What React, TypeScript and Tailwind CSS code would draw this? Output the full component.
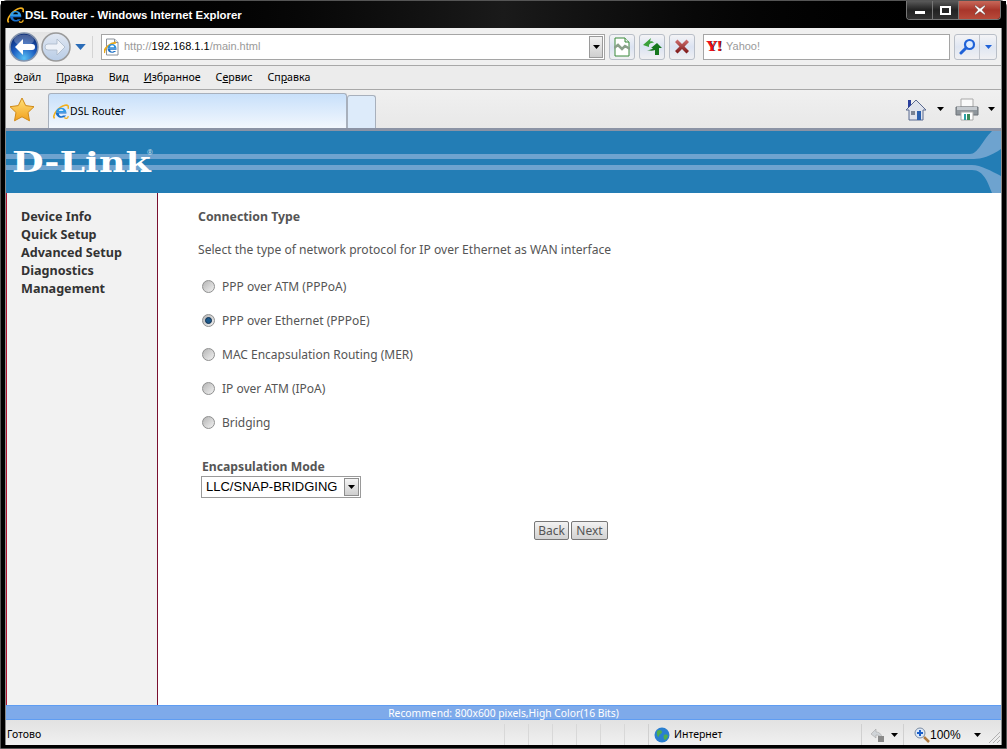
const ui = "font-['Noto_Sans',sans-serif]";

const IeLogo = ({ size = 16 }: { size?: number }) => (
  <svg width={size} height={size} viewBox="0 0 20 20" className="shrink-0">
    <path d="M2 18C-2 14 8 3 15 1.500c3.500-.6 5 1 3.800 4.500" fill="none" stroke="#f2b01e" strokeWidth="2" />
    <path d="M3.500 10.500a6.700 6.700 0 0 1 13.300 0H3.500zM7.200 8.600h5.900a3 3 0 0 0-5.900 0z" fill="#2f9be8" fillRule="evenodd" />
    <path d="M3.500 10.500c0 6.500 8.500 9 13 3.800h-4c-2 2-5 .8-5.300-2.300H16.800v-1.500z" fill="#1a6fca" />
    <path d="M14 17c2 1.500 5 1.500 5-2" fill="none" stroke="#f2b01e" strokeWidth="1.500" />
  </svg>
);

const PageIe = () => (
  <svg width="16" height="18" viewBox="0 0 16 18" className="shrink-0">
    <path d="M2.500 1h8l3.500 3.500V17h-11.500z" fill="#fff" stroke="#8a9098" />
    <path d="M10.500 1v3.500H14" fill="#dfe6ee" stroke="#8a9098" />
    <path d="M0.500 15C-1 11 6 5 12 4.500" fill="none" stroke="#e9a81c" strokeWidth="1.800" />
    <path d="M3.500 10.500a4.500 4.500 0 0 1 9 0h-9zM6 9.300h4.200a2.100 2.100 0 0 0-4.200 0z" fill="#2b8fdc" fillRule="evenodd" />
    <path d="M3.500 10.500c0 4.300 5.500 5.800 8.700 2.500H9.800c-1.300 1.300-3.400.5-3.700-1.300h6.400v-1.200z" fill="#1c6fc4" />
  </svg>
);

const NavCircle = ({ flip, dim }: { flip?: boolean; dim?: boolean }) => (
  <svg width="30" height="30" viewBox="0 0 30 30" className="shrink-0">
    <defs>
      <radialGradient id="navOn" cx="50%" cy="90%" r="80%">
        <stop offset="0%" stopColor="#58c0f4" />
        <stop offset="55%" stopColor="#1b5cc0" />
        <stop offset="100%" stopColor="#0b2c78" />
      </radialGradient>
      <linearGradient id="navOff" x1="0" y1="0" x2="0" y2="1">
        <stop offset="0%" stopColor="#e2e8f2" />
        <stop offset="100%" stopColor="#b8cce6" />
      </linearGradient>
    </defs>
    <circle cx="15" cy="15" r="14" fill={dim ? "url(#navOff)" : "url(#navOn)"} stroke={dim ? "#9a9a9a" : "#8494ac"} strokeWidth="1.500" />
    {!dim && <ellipse cx="15" cy="8" rx="10" ry="5.500" fill="#ffffff" opacity="0.25" />}
    <path
      d={flip ? "M16 7l8 8-8 8v-5H7a3 3 0 0 1 0-6h9z" : "M14 7l-8 8 8 8v-5h9a3 3 0 0 0 0-6h-9z"}
      fill={dim ? "#eef2f8" : "#fff"}
      stroke={dim ? "#a9b7c8" : "none"}
      strokeWidth="0.800"
    />
  </svg>
);

const Tri = ({ color = "#000", w = 7, h = 4 }: { color?: string; w?: number; h?: number }) => (
  <svg width={w} height={h} viewBox="0 0 7 4" className="shrink-0">
    <path d="M0 0h7L3.500 4z" fill={color} />
  </svg>
);

const ToolBtn = ({ children }: { children: React.ReactNode }) => (
  <div className="w-[26px] h-[26px] rounded-[3px] border border-[#b9bfc8] bg-gradient-to-b from-[#f4f4f6] via-[#dbe3f2] to-[#f0f0f2] flex items-center justify-center">
    {children}
  </div>
);

const Radio = ({ on }: { on?: boolean }) => (
  <span className="w-[13px] h-[13px] rounded-full border border-[#8e8f8f] bg-gradient-to-br from-[#b5b5b5] to-[#f2f2f2] flex items-center justify-center shrink-0">
    {on && <span className="w-[7px] h-[7px] rounded-full bg-[#1d5a8c] border border-[#0f2f50]" />}
  </span>
);

const Ul = ({ a, u, b }: { a?: string; u: string; b: string }) => (
  <span>
    {a}
    <span className="underline">{u}</span>
    {b}
  </span>
);

const protocols = [
  { label: "PPP over ATM (PPPoA)" },
  { label: "PPP over Ethernet (PPPoE)", on: true },
  { label: "MAC Encapsulation Routing (MER)" },
  { label: "IP over ATM (IPoA)" },
  { label: "Bridging" },
];

const sideLinks = ["Device Info", "Quick Setup", "Advanced Setup", "Diagnostics", "Management"];

export default function App() {
  return (
    <div className="w-[1007px] h-[749px] bg-white overflow-hidden">
      <div className={`w-full h-full bg-black rounded-t-[7px] border border-[#555] flex flex-col ${ui}`}>
        {/* title bar */}
        <div className="h-[27px] shrink-0 flex items-start bg-gradient-to-r from-black via-[#1a1a1a] to-black">
          <div className="flex items-center pl-[6px] pt-[5px] gap-px">
            <IeLogo size={17} />
            <span className="text-white text-[11.400px] leading-[18px] font-bold font-['Liberation_Sans',sans-serif]">
              DSL Router - Windows Internet Explorer
            </span>
          </div>
          <div className="ml-auto mr-[5px] flex h-[19px] border border-[#777] border-t-0 rounded-b-[4px] overflow-hidden">
            <div className="w-[26px] flex items-center justify-center bg-gradient-to-b from-[#5a5a5a] via-[#222] to-[#333] border-r border-[#777]">
              <span className="w-[10px] h-[3px] bg-white mt-[5px]" />
            </div>
            <div className="w-[26px] flex items-center justify-center bg-gradient-to-b from-[#5a5a5a] via-[#222] to-[#333] border-r border-[#777]">
              <span className="w-[11px] h-[9px] border-2 border-white" />
            </div>
            <div className="w-[41px] flex items-center justify-center bg-gradient-to-b from-[#c8685a] via-[#a8352a] to-[#b84a3a]">
              <svg width="12" height="10" viewBox="0 0 12 10">
                <path d="M1 0l5 3.500L11 0v1.500L8 5l3 3.500V10L6 6.500 1 10V8.500L4 5 1 1.500z" fill="#fff" stroke="#555" strokeWidth="0.400" />
              </svg>
            </div>
          </div>
        </div>

        {/* window body */}
        <div className="flex-1 min-h-0 mx-[4px] mb-[3px] flex flex-col border-x border-[#8a8a8a] bg-[#eeeeee]">
          {/* nav row */}
          <div className="h-[38px] shrink-0 flex items-center border-b border-[#a8a8a8] bg-[#f0f0f0] pl-[3px]">
            <div className="flex items-center gap-[2px] rounded-full bg-gradient-to-b from-[#e4e4e4] to-[#f4f4f4]">
              <NavCircle />
              <NavCircle flip dim />
            </div>
            <div className="ml-[4px]">
              <Tri color="#2a6cb8" w={11} h={6} />
            </div>
            <span className="ml-[6px] w-px h-[22px] bg-[#d4d4d4]" />
            <div className="ml-[8px] w-[504px] h-[26px] bg-white border border-[#a5a5a5] flex items-center pl-[2px] pr-[1px]">
              <PageIe />
              <span className="ml-[4px] text-[11px] text-[#9a9a9a] font-['Liberation_Sans',sans-serif]">
                http://<span className="text-black">192.168.1.1</span>/main.html
              </span>
              <div className="ml-auto w-[14px] h-[22px] border border-[#9a9a9a] bg-gradient-to-b from-[#f2f2f2] to-[#cfcfcf] flex items-center justify-center">
                <Tri />
              </div>
            </div>
            <div className="ml-[4px] flex gap-[4px]">
              <ToolBtn>
                <svg width="16" height="20" viewBox="0 0 16 20">
                  <path d="M1 1h10l4 4v14H1z" fill="#fff" stroke="#3b8a3b" />
                  <path d="M11 1v4h4" fill="#e6f0e6" stroke="#3b8a3b" />
                  <path d="M0 11l4-3 4 4 3-3 5 3" fill="none" stroke="#8aa08a" strokeWidth="2.500" />
                </svg>
              </ToolBtn>
              <ToolBtn>
                <svg width="20" height="19" viewBox="0 0 20 19">
                  <path d="M9 1L1 8l6 2V8c1-2 3-2.500 5-2-1-1.500-2-2-4-1.500z" fill="#3aa03a" />
                  <path d="M5 13c3 0 5-.5 6-2H9l6-5 5 5h-3v7h-4v-5c-2 1-5 1-8 0z" fill="#15771d" />
                </svg>
              </ToolBtn>
              <ToolBtn>
                <svg width="16" height="15" viewBox="0 0 16 15">
                  <defs>
                    <linearGradient id="stop" x1="0" y1="0" x2="0" y2="1">
                      <stop offset="0%" stopColor="#d07070" />
                      <stop offset="100%" stopColor="#7a1414" />
                    </linearGradient>
                  </defs>
                  <path d="M1 3l2.500-2.500L8 5l4.500-4.500L15 3l-4.500 4.500L15 12l-2.500 2.500L8 10l-4.500 4.500L1 12l4.500-4.500z" fill="url(#stop)" />
                </svg>
              </ToolBtn>
            </div>
            <div className="ml-[8px] w-[247px] h-[26px] bg-white border border-[#a5a5a5] flex items-center pl-[2px]">
              <span className="w-[18px] text-[#f0101c] text-[15px] leading-none font-bold font-['Liberation_Serif',serif] [text-shadow:1px_0_0_#300]">
                Y!
              </span>
              <span className="ml-[2px] text-[11px] text-[#9a9a9a] font-['Liberation_Sans',sans-serif]">Yahoo!</span>
            </div>
            <div className="ml-[4px] w-[43px] h-[26px] rounded-[3px] border border-[#b9bfc8] bg-gradient-to-b from-[#f4f4f6] via-[#dfe6f2] to-[#f0f0f2] flex">
              <div className="w-[25px] flex items-center justify-center border-r border-[#c0c4cc]">
                <svg width="17" height="17" viewBox="0 0 17 17">
                  <circle cx="10.500" cy="6.500" r="4.500" fill="#dcebff" stroke="#1f62d8" strokeWidth="2.200" />
                  <path d="M7 10l-5 5" stroke="#1f62d8" strokeWidth="3" strokeLinecap="round" />
                </svg>
              </div>
              <div className="flex-1 flex items-center justify-center">
                <Tri color="#1f62d8" />
              </div>
            </div>
          </div>

          {/* menu row */}
          <div className="h-[24px] shrink-0 flex items-center border-b border-[#a8a8a8] bg-[#ececec] pl-[8px] gap-[15px] text-[10.600px] text-black">
            <Ul u="Ф" b="айл" />
            <Ul u="П" b="равка" />
            <Ul a="Ви" u="д" b="" />
            <Ul u="И" b="збранное" />
            <Ul a="С" u="е" b="рвис" />
            <Ul a="Сп" u="р" b="авка" />
          </div>

          {/* tab row */}
          <div className="h-[41px] shrink-0 flex items-end bg-gradient-to-b from-[#f0f0f0] to-[#e8e8e8] border-b-[3px] border-[#8b93a5] pl-[3px]">
            <div className="w-[38px] h-full flex items-center">
              <svg width="26" height="25" viewBox="0 0 26 25">
                <defs>
                  <linearGradient id="star" x1="0" y1="0" x2="0" y2="1">
                    <stop offset="0%" stopColor="#ffe27a" />
                    <stop offset="100%" stopColor="#f2a01c" />
                  </linearGradient>
                </defs>
                <path d="M13 1l3.700 7.600 8.300 1.100-6 5.800 1.500 8.300-7.500-4-7.500 4L7 15.500 1 9.700l8.300-1.100z" fill="url(#star)" stroke="#d08a18" />
              </svg>
            </div>
            <div className="ml-[1px] w-[299px] h-[35px] rounded-t-[3px] border border-b-0 border-[#a8b0bc] bg-gradient-to-b from-[#c8e0fa] to-[#f2f7fd] flex items-center pl-[4px] pt-px gap-[1px]">
              <IeLogo size={16} />
              <span className="text-[10.500px] text-black">DSL Router</span>
            </div>
            <div className="w-[29px] h-[33px] rounded-t-[3px] border border-b-0 border-[#a8b0bc] bg-[#ddebfa]" />
            <div className="ml-auto h-full flex items-center pr-[6px]">
              <svg width="22" height="23" viewBox="0 0 22 23">
                <path d="M11 2L1 12h3v10h14V12h3z" fill="#dfe3ec" stroke="#5a6a90" />
                <path d="M3 2h3v5L3 10z" fill="#2a3f9c" />
                <path d="M12 13h4v9h-4z" fill="#2a5fae" />
                <path d="M6 13h4v4H6z" fill="#7a8494" />
              </svg>
              <span className="ml-[10px]">
                <Tri />
              </span>
              <svg width="24" height="23" viewBox="0 0 24 23" className="ml-[11px]">
                <path d="M6 1h12v8H6z" fill="#fafafa" stroke="#a8a8a8" />
                <path d="M1 9h22v8H1z" fill="#8f969c" stroke="#6c7278" />
                <path d="M2 9h20v3H2z" fill="#c6cbd0" />
                <path d="M6 14h12v8H6z" fill="#fff" stroke="#a8a8a8" />
                <path d="M9 16h2v6H9z" fill="#2aa0a8" />
                <path d="M12 16h3v6h-3z" fill="#3a8a5a" />
              </svg>
              <span className="ml-[9px]">
                <Tri />
              </span>
            </div>
          </div>

          {/* page */}
          <div className="flex-1 min-h-0 flex flex-col bg-white">
            <div className="relative h-[62px] shrink-0 bg-[#237db5] overflow-hidden">
              <svg width="995" height="62" viewBox="0 0 995 62" className="absolute inset-0">
                <path d="M0 23H964C972 23 976 10 986 0H995V18C985 25 975 28 968 28H0z" fill="#6ea3cf" />
                <path d="M0 34H966C975 34 985 40 995 45V62H986C982 52 978 39 966 39H0z" fill="#6ea3cf" />
              </svg>
              <span className="absolute left-[6px] top-[15px] origin-left scale-x-[1.35] text-white text-[27px] leading-[34px] font-bold font-['DejaVu_Serif',serif]">
                D-Link
              </span>
              <span className="absolute left-[141px] top-[18px] text-[#cfe0ee] text-[7px] leading-[8px]">®</span>
            </div>
            <div className="flex-1 min-h-0 flex">
              <aside className="w-[152px] shrink-0 bg-[#f2f2f2] border-l border-l-[#b01030] border-r border-r-[#7a1030] pt-[15px] pl-[14px]">
                {sideLinks.map((s) => (
                  <div key={s} className="h-[18px] leading-[18px] text-[12.600px] font-bold text-[#333]">
                    {s}
                  </div>
                ))}
              </aside>
              <main className="flex-1 pl-[40px] text-[12px] text-[#555]">
                <div className="mt-[15px] h-[18px] leading-[18px] font-bold text-[12.300px]">Connection Type</div>
                <div className="mt-[15px] h-[18px] leading-[18px] text-[12.100px]">
                  Select the type of network protocol for IP over Ethernet as WAN interface
                </div>
                <div className="mt-[10px] ml-[4px] flex flex-col">
                  {protocols.map((p) => (
                    <div key={p.label} className="h-[34px] flex items-center gap-[7px]">
                      <Radio on={p.on} />
                      <span className="pt-px">{p.label}</span>
                    </div>
                  ))}
                </div>
                <div className="mt-[19px] ml-[4px] h-[18px] leading-[18px] font-bold text-[12.200px]">
                  Encapsulation Mode
                </div>
                <div className="ml-[3px] w-[160px] h-[22px] border border-[#9a9a9a] bg-white flex items-center pl-[4px] pr-[1px] text-[13px] text-black font-['Liberation_Sans',sans-serif] whitespace-nowrap">
                  LLC/SNAP-BRIDGING
                  <span className="ml-auto w-[15px] h-[18px] border border-[#8e8e8e] bg-gradient-to-b from-[#f4f4f4] to-[#cfcfcf] flex items-center justify-center">
                    <Tri />
                  </span>
                </div>
                <div className="mt-[23px] ml-[336px] flex gap-[2px]">
                  <div className="w-[35px] h-[19px] border border-[#777] rounded-[2px] bg-gradient-to-b from-[#f2f2f2] to-[#d2d2d2] text-center leading-[17px]">Back</div>
                  <div className="w-[37px] h-[19px] border border-[#777] rounded-[2px] bg-gradient-to-b from-[#f2f2f2] to-[#d2d2d2] text-center leading-[17px]">Next</div>
                </div>
              </main>
            </div>
            <div className="h-[15px] shrink-0 bg-[#7eaaea] border-y border-[#5f9df2] text-white text-[10.300px] leading-[14px] text-center">
              Recommend: 800x600 pixels,High Color(16 Bits)
            </div>
          </div>

          {/* status bar */}
          <div className="h-[25px] shrink-0 flex items-center pt-[4px] bg-gradient-to-b from-[#e2e2e2] to-[#f0f0f0] text-[10.500px] text-black">
            <span className="pl-px">Готово</span>
            <div className="ml-auto flex items-center h-[21px]">
              {[0, 1, 2, 3, 4, 5].map((i) => (
                <span key={i} className="w-[24px] h-full border-l border-[#d8d8d8]" />
              ))}
              <span className="w-px h-full bg-[#d0d0d0]" />
              <svg width="16" height="16" viewBox="0 0 16 16" className="ml-[5px]">
                <circle cx="8" cy="8" r="7.500" fill="#2a7fd0" />
                <path d="M3 4c2-2 5-1 5 1s-3 2-3 4-3 0-2-5zM10 8c2-1 4 0 4 1s-2 4-3 4-2-4-1-5z" fill="#4fae4f" />
              </svg>
              <span className="ml-[4px] w-[187px]">Интернет</span>
              <span className="w-px h-full bg-[#d0d0d0]" />
              <svg width="17" height="16" viewBox="0 0 17 16" className="ml-[7px]">
                <path d="M2 7l5-5v3c4 0 6 3 6 7-2-3-3-4-6-4v3z" fill="#d0d4d8" stroke="#9a9a9a" strokeWidth="0.500" />
                <path d="M9 9h6v6H9z" fill="#8a8a8a" />
              </svg>
              <span className="ml-[5px]">
                <Tri />
              </span>
              <span className="ml-[5px] w-px h-full bg-[#d0d0d0]" />
              <svg width="16" height="16" viewBox="0 0 16 16" className="ml-[10px]">
                <circle cx="6" cy="6" r="5" fill="#dce8f8" stroke="#7a8aa0" />
                <path d="M6 3v6M3 6h6" stroke="#1c5fc8" strokeWidth="2" />
                <path d="M10 10l5 5" stroke="#b07a40" strokeWidth="2.500" />
              </svg>
              <span className="w-[44px] font-['Liberation_Sans',sans-serif] text-[12px]">100%</span>
              <Tri />
              <svg width="13" height="13" viewBox="0 0 13 13" className="ml-[7px] mt-[6px]">
                <path d="M12 1L1 12M12 5l-7 7M12 9l-3 3" stroke="#b0b0b0" />
              </svg>
            </div>
          </div>
        </div>
      </div>
    </div>
  );
}
